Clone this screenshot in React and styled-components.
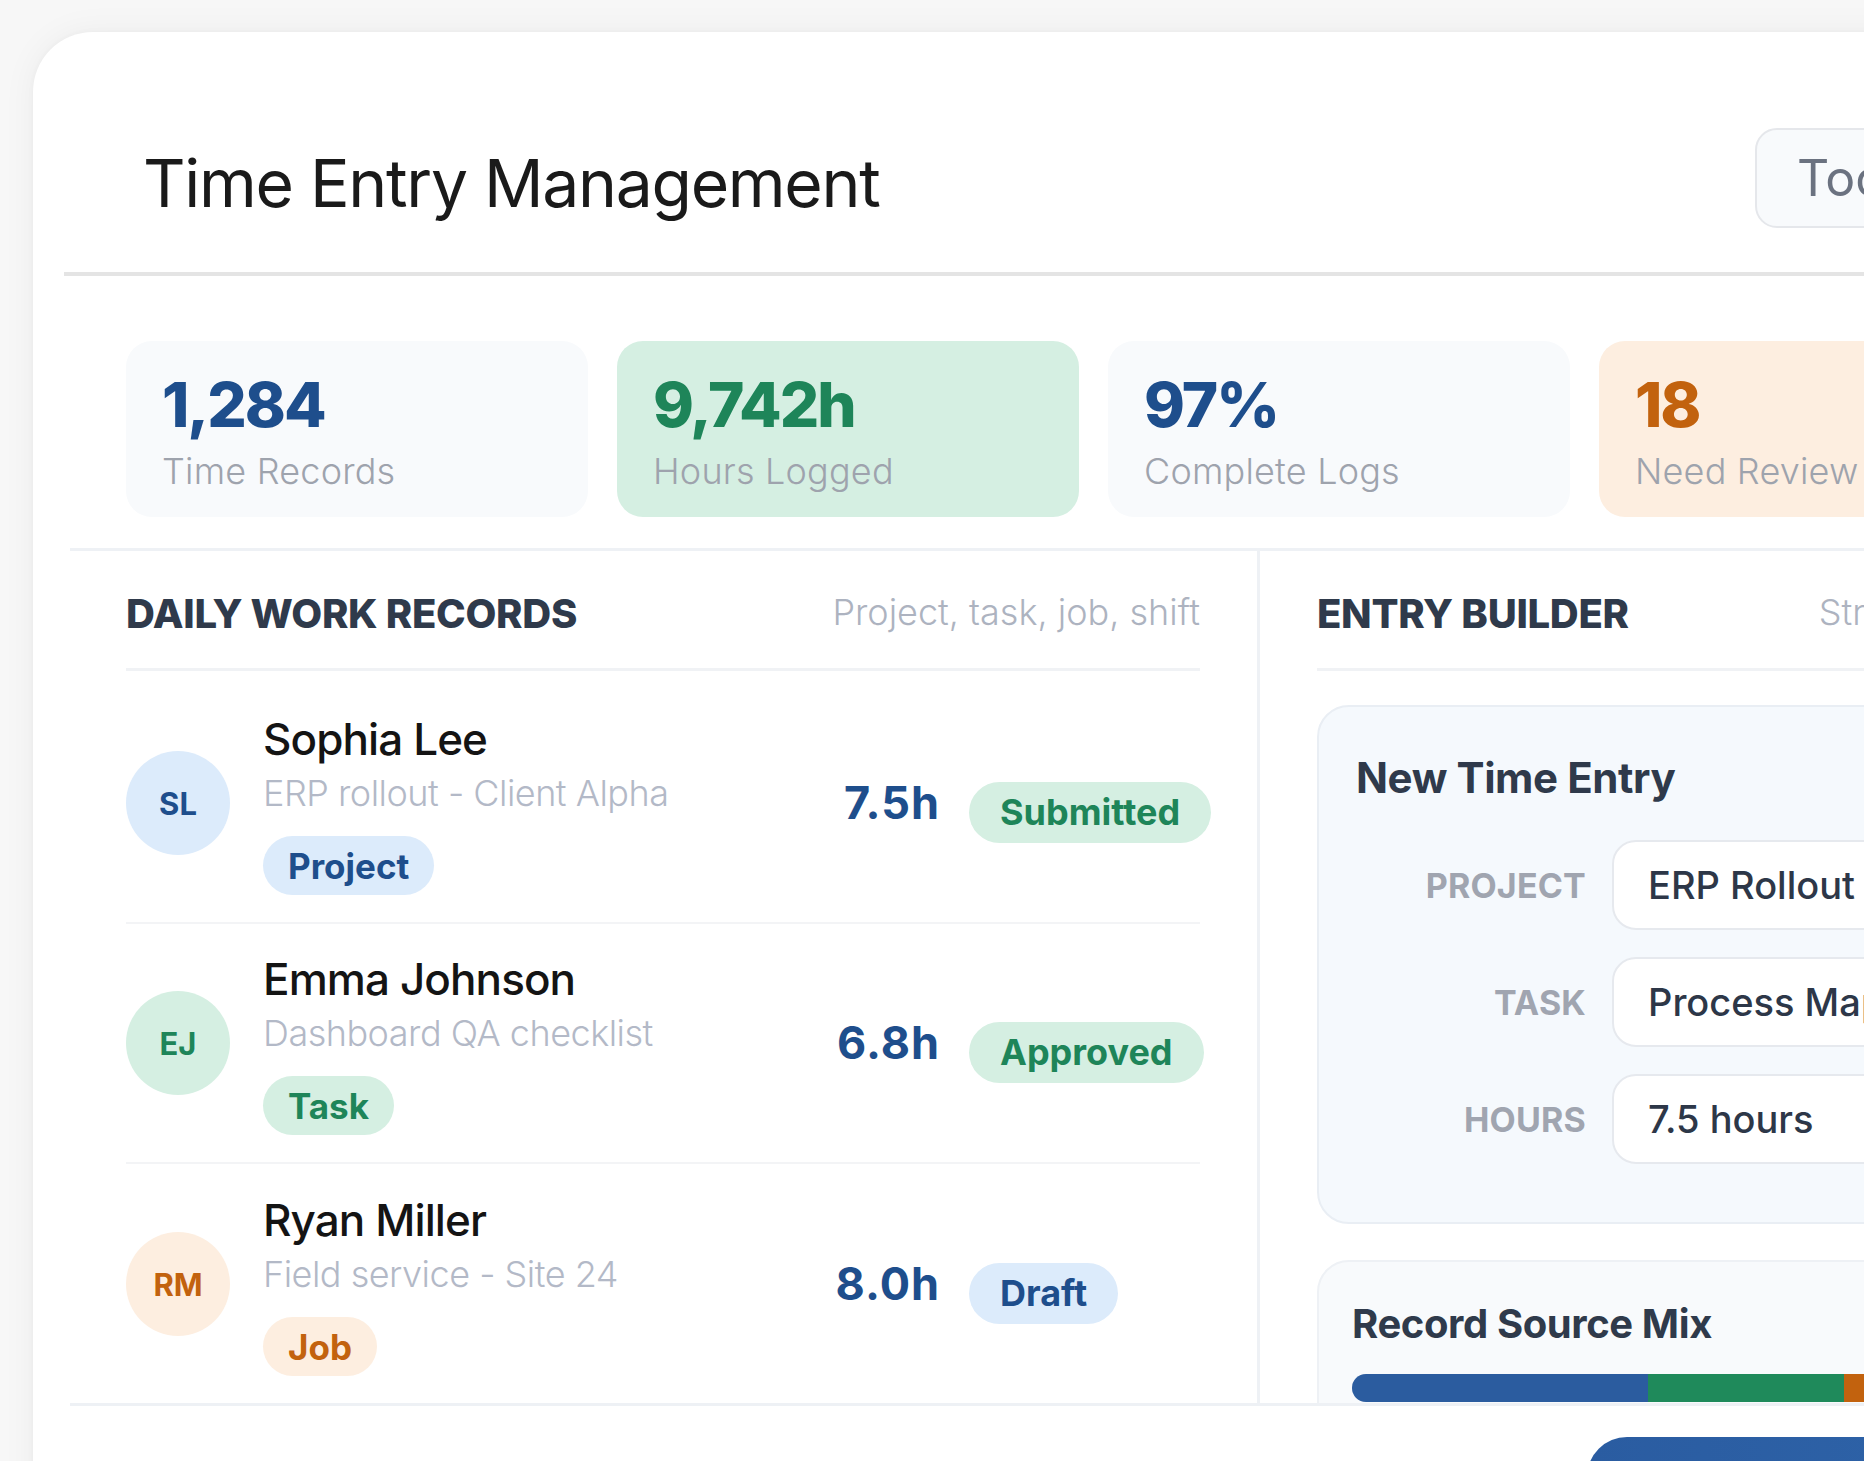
import React from "react";
import styled, { createGlobalStyle } from "styled-components";

const GlobalStyle = createGlobalStyle`
  html, body {
    margin: 0;
    padding: 0;
    background: #f7f7f7;
    overflow: hidden;
  }
  body {
    font-family: Inter, "Noto Sans", "Liberation Sans", sans-serif;
    -webkit-font-smoothing: antialiased;
  }
  * { box-sizing: border-box; }
`;

const tones = {
  blue: { fg: "#1e4e8c", bg: "#dcebfb" },
  green: { fg: "#1e8559", bg: "#d5efe2" },
  orange: { fg: "#c2620e", bg: "#fdeee0" },
  plain: { fg: "#1e4e8c", bg: "#f8fafc" },
};

const Page = styled.div`
  width: 1864px;
  height: 1461px;
  padding: 32px 0 0 33px;
  overflow: hidden;
`;

const Card = styled.div`
  width: 2156px;
  min-height: 1600px;
  background: #fff;
  border-radius: 60px;
  box-shadow: 0 0 34px rgba(0, 0, 0, 0.05), 0 0 6px rgba(0, 0, 0, 0.03);
`;

const Header = styled.header`
  margin-left: 31px;
  height: 244px;
  padding: 0 0 44px 79px;
  display: flex;
  align-items: flex-end;
  border-bottom: 4px solid #e4e4e4;
`;

const Title = styled.h1`
  flex: 0 0 1612px;
  margin: 0 0 5px;
  font-size: 66px;
  line-height: 79px;
  font-weight: 400;
  color: #1a1a1a;
  letter-spacing: -1.3px;
`;

const GhostButton = styled.button`
  height: 100px;
  padding: 0 40px;
  border: 2px solid #e5e7eb;
  border-radius: 22px;
  background: #f8fafc;
  color: #6b7280;
  font-family: inherit;
  font-size: 50px;
  font-weight: 400;
  white-space: nowrap;
`;

const Stats = styled.section`
  margin-left: 37px;
  padding: 65px 0 31px 56px;
  display: grid;
  grid-template-columns: repeat(4, 462px);
  gap: 29px;
  border-bottom: 3px solid #eef1f5;
`;

const StatCard = styled.div`
  height: 176px;
  border-radius: 26px;
  padding: 30px 36px 24px;
  background: ${p => tones[p.tone].bg};
`;

const StatValue = styled.div`
  font-size: 62px;
  line-height: 68px;
  font-weight: 800;
  letter-spacing: -2px;
  color: ${p => p.color};
`;

const StatLabel = styled.div`
  margin-top: 10px;
  font-size: 36px;
  line-height: 44px;
  font-weight: 300;
  color: #9ea3ad;
  letter-spacing: 0.2px;
`;

const Body = styled.div`
  margin-left: 37px;
  height: 855px;
  display: grid;
  grid-template-columns: 1190px 1fr;
  border-bottom: 3px solid #eef1f5;
  overflow: hidden;
`;

const Column = styled.div`
  padding: ${p => (p.right ? "0 57px 0 57px" : "0 57px 0 56px")};
  border-right: ${p => (p.right ? "none" : "3px solid #eef1f5")};
  min-width: 0;
`;

const SectionHead = styled.div`
  display: flex;
  justify-content: ${p => (p.gap ? "flex-start" : "space-between")};
  gap: ${p => p.gap || 0}px;
  align-items: baseline;
  padding: 39px 0 31px;
  border-bottom: 3px solid #f0f2f5;
  overflow: hidden;
`;

const SectionTitle = styled.h2`
  margin: 0;
  font-size: 40px;
  line-height: 47px;
  font-weight: 800;
  letter-spacing: -0.3px;
  color: #2f3a4b;
  white-space: nowrap;
`;

const SectionHint = styled.span`
  font-size: 36px;
  font-weight: 300;
  color: #adb3c0;
  white-space: nowrap;
  position: relative;
  top: -3px;
`;

const RowList = styled.div`
  margin-top: 13px;
`;

const Row = styled.div`
  height: 240px;
  display: grid;
  grid-template-columns: 104px 1fr auto 231px;
  column-gap: 29px;
  align-items: center;
  border-bottom: ${p => (p.last ? "none" : "2px solid #f3f4f6")};
`;

const Avatar = styled.div`
  width: 104px;
  height: 104px;
  border-radius: 50%;
  display: flex;
  align-items: center;
  justify-content: center;
  font-size: 31px;
  font-weight: 700;
  background: ${p => tones[p.tone].bg};
  color: ${p => tones[p.tone].fg};
`;

const Info = styled.div`
  padding-left: 4px;
  display: flex;
  flex-direction: column;
  align-items: flex-start;
`;

const Name = styled.div`
  margin-top: 2px;
  font-size: 44px;
  line-height: 53px;
  font-weight: 500;
  color: #141414;
  letter-spacing: -0.9px;
`;

const Sub = styled.div`
  margin-top: 6px;
  font-size: 36px;
  line-height: 43px;
  font-weight: 300;
  color: #b3b9c7;
  letter-spacing: -0.5px;
`;

const Tag = styled.span`
  margin-top: 21px;
  height: 59px;
  padding: 0 25px;
  display: inline-flex;
  align-items: center;
  border-radius: 30px;
  font-size: 35px;
  font-weight: 700;
  background: ${p => tones[p.tone].bg};
  color: ${p => tones[p.tone].fg};
`;

const Hours = styled.div`
  font-size: 45px;
  line-height: 54px;
  font-weight: 700;
  letter-spacing: 1px;
  color: #1e4e8c;
  text-align: right;
`;

const Status = styled.span`
  justify-self: start;
  margin-top: 18px;
  height: 61px;
  padding: 0 31px;
  display: inline-flex;
  align-items: center;
  border-radius: 31px;
  white-space: nowrap;
  font-size: 36px;
  font-weight: 700;
  background: ${p => tones[p.tone].bg};
  color: ${p => tones[p.tone].fg};
`;

const Panel = styled.div`
  margin-top: ${p => p.gap}px;
  border: 2px solid ${p => p.border};
  border-radius: 32px;
  background: ${p => p.bg};
  padding: ${p => p.pad};
`;

const PanelTitle = styled.h3`
  margin: 0 0 ${p => p.below}px;
  font-size: ${p => p.size}px;
  line-height: 1.2;
  font-weight: 700;
  letter-spacing: -0.4px;
  color: #2f3a4b;
`;

const Form = styled.div`
  display: grid;
  grid-template-columns: 230px 1fr;
  column-gap: 26px;
  row-gap: 27px;
  align-items: center;
`;

const FieldLabel = styled.label`
  text-align: right;
  font-size: 34px;
  font-weight: 700;
  letter-spacing: 0.2px;
  color: #a0a5b0;
`;

const Field = styled.div`
  height: 90px;
  padding-left: 34px;
  display: flex;
  align-items: center;
  border: 2px solid #e6e9ee;
  border-radius: 24px;
  background: #fff;
  font-size: 38px;
  font-weight: 500;
  color: #2d3748;
  white-space: nowrap;
  overflow: hidden;
`;

const Bar = styled.div`
  height: 28px;
  display: flex;
  border-radius: 14px;
  overflow: hidden;
  background: #e8ecf2;
`;

const Segment = styled.div`
  height: 100%;
  background: ${p => p.color};
`;

const Footer = styled.footer`
  padding: 31px 0 0 1554px;
`;

const PrimaryButton = styled.button`
  height: 100px;
  padding: 0 64px;
  border: none;
  border-radius: 40px;
  background: linear-gradient(90deg, #2a5ca1, #2e63a8);
  color: #fff;
  font-family: inherit;
  font-size: 36px;
  font-weight: 700;
  white-space: nowrap;
`;

const stats = [
  { value: "1,284", label: "Time Records", tone: "plain", color: tones.blue.fg },
  { value: "9,742h", label: "Hours Logged", tone: "green", color: tones.green.fg },
  { value: "97%", label: "Complete Logs", tone: "plain", color: tones.blue.fg },
  { value: "18", label: "Need Review", tone: "orange", color: tones.orange.fg },
];

const records = [
  { initials: "SL", name: "Sophia Lee", sub: "ERP rollout - Client Alpha", tag: "Project", tone: "blue", hours: "7.5h", status: "Submitted", statusTone: "green" },
  { initials: "EJ", name: "Emma Johnson", sub: "Dashboard QA checklist", tag: "Task", tone: "green", hours: "6.8h", status: "Approved", statusTone: "green" },
  { initials: "RM", name: "Ryan Miller", sub: "Field service - Site 24", tag: "Job", tone: "orange", hours: "8.0h", status: "Draft", statusTone: "blue" },
];

const fields = [
  { label: "PROJECT", value: "ERP Rollout" },
  { label: "TASK", value: "Process Mapping" },
  { label: "HOURS", value: "7.5 hours" },
];

const mix = [
  { share: 39.7, color: "#2b5c9f" },
  { share: 26.3, color: "#1f8a5b" },
  { share: 16, color: "#c2620e" },
];

export default function App() {
  return (
    <Page>
      <GlobalStyle />
      <Card>
        <Header>
          <Title>Time Entry Management</Title>
          <GhostButton>Today</GhostButton>
        </Header>

        <Stats>
          {stats.map(s => (
            <StatCard key={s.label} tone={s.tone}>
              <StatValue color={s.color}>{s.value}</StatValue>
              <StatLabel>{s.label}</StatLabel>
            </StatCard>
          ))}
        </Stats>

        <Body>
          <Column>
            <SectionHead>
              <SectionTitle>DAILY WORK RECORDS</SectionTitle>
              <SectionHint>Project, task, job, shift</SectionHint>
            </SectionHead>
            <RowList>
              {records.map((r, i) => (
                <Row key={r.name} last={i === records.length - 1}>
                  <Avatar tone={r.tone}>{r.initials}</Avatar>
                  <Info>
                    <Name>{r.name}</Name>
                    <Sub>{r.sub}</Sub>
                    <Tag tone={r.tone}>{r.tag}</Tag>
                  </Info>
                  <Hours>{r.hours}</Hours>
                  <Status tone={r.statusTone}>{r.status}</Status>
                </Row>
              ))}
            </RowList>
          </Column>

          <Column right>
            <SectionHead gap={190}>
              <SectionTitle>ENTRY BUILDER</SectionTitle>
              <SectionHint>Structured input</SectionHint>
            </SectionHead>

            <Panel gap={34} border="#e9eef4" bg="#f5f9fd" pad="46px 39px 58px 37px">
              <PanelTitle size={42} below={37}>New Time Entry</PanelTitle>
              <Form>
                {fields.map(f => (
                  <React.Fragment key={f.label}>
                    <FieldLabel>{f.label}</FieldLabel>
                    <Field>{f.value}</Field>
                  </React.Fragment>
                ))}
              </Form>
            </Panel>

            <Panel gap={36} border="#eef1f5" bg="#f8fafc" pad="38px 33px">
              <PanelTitle size={40} below={26}>Record Source Mix</PanelTitle>
              <Bar>
                {mix.map(m => (
                  <Segment key={m.color} color={m.color} style={{ width: `${m.share}%` }} />
                ))}
              </Bar>
            </Panel>
          </Column>
        </Body>

        <Footer>
          <PrimaryButton>Save Time Entry</PrimaryButton>
        </Footer>
      </Card>
    </Page>
  );
}
